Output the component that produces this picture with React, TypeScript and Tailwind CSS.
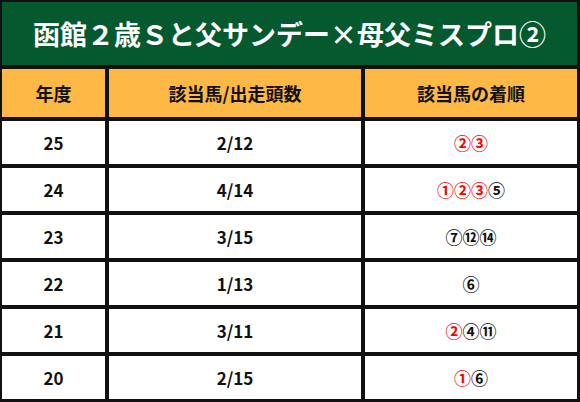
import React from "react";

const FONT = { fontFamily: '"Noto Sans CJK JP", "Noto Sans", sans-serif' };

type Pos = { n: string; red: boolean };
const rows: { year: string; count: string; pos: Pos[] }[] = [
  { year: "25", count: "2/12", pos: [{ n: "②", red: true }, { n: "③", red: true }] },
  { year: "24", count: "4/14", pos: [{ n: "①", red: true }, { n: "②", red: true }, { n: "③", red: true }, { n: "⑤", red: false }] },
  { year: "23", count: "3/15", pos: [{ n: "⑦", red: false }, { n: "⑫", red: false }, { n: "⑭", red: false }] },
  { year: "22", count: "1/13", pos: [{ n: "⑥", red: false }] },
  { year: "21", count: "3/11", pos: [{ n: "②", red: true }, { n: "④", red: false }, { n: "⑪", red: false }] },
  { year: "20", count: "2/15", pos: [{ n: "①", red: true }, { n: "⑥", red: false }] },
];

export default function App() {
  return (
    <div
      className="w-[580px] h-[402px] bg-[#111111] pt-[2px] pl-[2px] pr-[3px] pb-[3px] flex flex-col gap-[4px]"
      style={FONT}
    >
      <div className="h-[63px] bg-[#045a2e] flex items-center justify-center text-white font-bold text-[27px] leading-none">
        函館２歳Ｓと父サンデー×母父ミスプロ②
      </div>
      <div className="grid grid-cols-[103px_252px_212px] gap-x-[4px] h-[48px]">
        <div className="bg-[#fdb845] flex items-center justify-center font-bold text-[18px] text-[#111]">年度</div>
        <div className="bg-[#fdb845] flex items-center justify-center font-bold text-[18px] text-[#111]">該当馬/出走頭数</div>
        <div className="bg-[#fdb845] flex items-center justify-center font-bold text-[18px] text-[#111]">該当馬の着順</div>
      </div>
      {rows.map((r) => (
        <div key={r.year} className="grid grid-cols-[103px_252px_212px] gap-x-[4px] h-[43px]">
          <div className="bg-white flex items-center justify-center font-bold text-[17px] text-[#111]">{r.year}</div>
          <div className="bg-white flex items-center justify-center font-bold text-[17px] text-[#111]">{r.count}</div>
          <div className="bg-white flex items-center justify-center font-bold text-[17px]">
            {r.pos.map((p, i) => (
              <span key={i} className={p.red ? "text-[#ff0000]" : "text-[#111]"}>
                {p.n}
              </span>
            ))}
          </div>
        </div>
      ))}
    </div>
  );
}
